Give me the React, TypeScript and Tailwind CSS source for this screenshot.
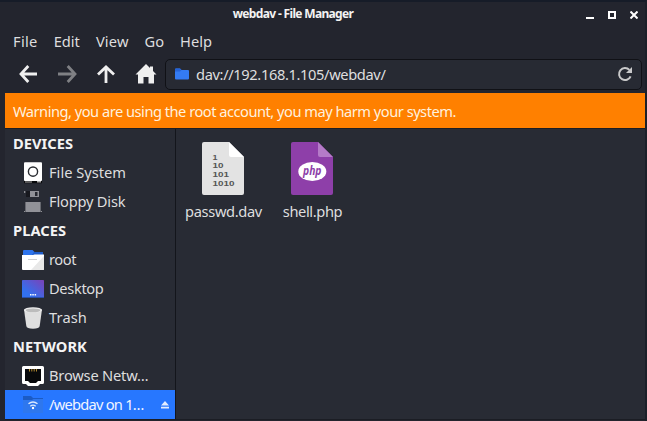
import type { ReactNode } from "react";

const places: { title: string; spacing: string; items: { label: string; spacing: string; icon: ReactNode; active?: boolean }[] }[] = [
  {
    title: "DEVICES",
    spacing: "tracking-[0.05px]",
    items: [
      { label: "File System", spacing: "tracking-[0px]", icon: <DriveIcon /> },
      { label: "Floppy Disk", spacing: "tracking-[-0.2px]", icon: <FloppyIcon /> },
    ],
  },
  {
    title: "PLACES",
    spacing: "tracking-[0.05px]",
    items: [
      { label: "root", spacing: "tracking-[-0.4px]", icon: <HomeFolderIcon /> },
      { label: "Desktop", spacing: "tracking-[-0.35px]", icon: <DesktopIcon /> },
      { label: "Trash", spacing: "tracking-[0.1px]", icon: <TrashIcon /> },
    ],
  },
  {
    title: "NETWORK",
    spacing: "tracking-[0.05px]",
    items: [
      { label: "Browse Netw…", spacing: "tracking-[-0.2px]", icon: <NetworkIcon /> },
      { label: "/webdav on 1…", spacing: "tracking-[-0.75px]", icon: <RemoteFolderIcon />, active: true },
    ],
  },
];

function DriveIcon() {
  return (
    <svg width="24" height="24" viewBox="0 0 24 24">
      <rect x="3" y="1.3" width="18" height="18.7" rx="1" fill="#fff" />
      <circle cx="12" cy="10.6" r="4.6" fill="#fff" stroke="#292c31" strokeWidth="1.4" />
      <path d="M3 20h18v2.200H3z" fill="#08090b" />
      <path d="M4 20.600h7v1H4zM16 20h4v1.600h-4z" fill="#aaa" />
    </svg>
  );
}

function FloppyIcon() {
  return (
    <svg width="24" height="24" viewBox="0 0 24 24">
      <path d="M3 1h1.300v2H3zM3 21h1v1H3zM20 21h1v1h-1z" fill="#8f9095" />
      <path d="M5 1h4v6H5z" fill="#17181e" />
      <path d="M9 1h9v6H9z" fill="#909198" />
      <path d="M14 2h2.500v4H14z" fill="#262830" />
      <path d="M4.400 12h15.200v10H4.400z" fill="#919298" />
    </svg>
  );
}

function HomeFolderIcon() {
  return (
    <svg width="24" height="24" viewBox="0 0 24 24">
      <path d="M2 3.200Q2 2 3 2h8.500l2 2H22v8H2z" fill="#2f74eb" />
      <path d="M13 4h9v3H11z" fill="#205ecb" />
      <path d="M1 7h11l1.500-.500H23V21q0 1-1 1H2q-1 0-1-1z" fill="#fff" />
      <path d="M23 8v13q0 1-1 1H10z" fill="#e8e8e8" />
      <path d="M7 11.500h9" stroke="#cfcfcf" />
    </svg>
  );
}

function DesktopIcon() {
  return (
    <svg width="24" height="24" viewBox="0 0 24 24">
      <defs>
        <linearGradient id="desk" x1="0" y1="1" x2="1" y2="0">
          <stop offset=".25" stopColor="#3271f0" />
          <stop offset="1" stopColor="#7b42b8" />
        </linearGradient>
      </defs>
      <rect x="1" y="3" width="22" height="18" rx=".7" fill="url(#desk)" />
      <path d="M1 20h22v1H1z" fill="#294fa8" />
      <path d="M9 17h1.500v1.500H9zM11.300 17h1.500v1.500h-1.500zM13.600 17h1.500v1.500h-1.500z" fill="#fff" />
    </svg>
  );
}

function TrashIcon() {
  return (
    <svg width="24" height="24" viewBox="0 0 24 24">
      <path d="M3 3.500 5.300 20q.4 2.800 6.700 2.800t6.700-2.800L21 3.500z" fill="#dfdfdf" />
      <ellipse cx="12" cy="4" rx="9" ry="2.800" fill="#ededed" />
      <ellipse cx="12" cy="4.300" rx="7.400" ry="1.900" fill="#bcbcbc" />
    </svg>
  );
}

function NetworkIcon() {
  return (
    <svg width="24" height="24" viewBox="0 0 24 24">
      <path d="M2.500 2h19Q23 2 23 3.500v15q0 1.500-1.500 1.500H19l-2 2H7l-2-2H2.500Q1 20 1 18.500V3.500Q1 2 2.500 2z" fill="#fff" />
      <path d="M4 5h16v12h-3l-2 2H9l-2-2H4z" fill="#08090b" />
      <path d="M8.500 5v2.500M10.800 5v2.500M13.200 5v2.500M15.500 5v2.500" stroke="#ad8730" />
    </svg>
  );
}

function RemoteFolderIcon() {
  return (
    <svg width="24" height="24" viewBox="0 0 24 24">
      <path d="M2 3h8l2 2h10v2H2z" fill="#1b5bc5" />
      <path d="M2 7h9l1.500-1H22v14H2z" fill="#2e77ee" />
      <g fill="none" stroke="#d9e9ff" strokeWidth="1.400">
        <path d="M7.500 10.800q4.500-3.600 9 0M9.300 13.200q2.700-2.200 5.400 0" />
      </g>
      <circle cx="12" cy="15" r="1.200" fill="#fff" />
    </svg>
  );
}

function Toolbar() {
  return (
    <div className="flex h-[36px] items-center pr-[3px] pl-[14px]">
      <svg className="mr-[19px] shrink-0" width="20" height="20" viewBox="0 0 20 20" fill="none" stroke="#efefef" strokeWidth="2.800">
        <path d="M9.300 2 2 10l7.300 8M2.500 10H18" />
      </svg>
      <svg className="mr-[19px] shrink-0" width="20" height="20" viewBox="0 0 20 20" fill="none" stroke="#7f8084" strokeWidth="2.800">
        <path d="m9.700 2 7.300 8-7.300 8M16.500 10H0" />
      </svg>
      <svg className="mr-[18px] shrink-0" width="20" height="20" viewBox="0 0 20 20" fill="none" stroke="#efefef" strokeWidth="2.800">
        <path d="M1 10.500 9 3l8 7.500M9 3.500V19" />
      </svg>
      <svg className="mr-[8px] shrink-0" width="22" height="22" viewBox="0 0 22 22" fill="#efefef">
        <path d="M11 1 .500 11.500H3V20.500h5.500V14h5v6.500H19v-9h2.500L18 8V3.500h-3V5z" />
      </svg>
      <div className="flex h-[31px] flex-1 items-center rounded-[5px] border border-[#101116] bg-[#272a33] px-[8px]">
        <svg width="16" height="16" viewBox="0 0 16 16">
          <path d="M1 3.500Q1 2.500 2 2.500h4l1.500 1.500H14q1 0 1 1v7.500q0 1-1 1H2q-1 0-1-1z" fill="#347bf3" />
          <path d="M1 3.500Q1 2.500 2 2.500h4l1.500 1.500L6 5.500H1z" fill="#2563d6" />
        </svg>
        <span className="ml-[6px] flex-1 tracking-[-0.37px] whitespace-nowrap">dav://192.168.1.105/webdav/</span>
        <svg width="16" height="16" viewBox="0 0 16 16" fill="none" stroke="#c9c9ca" strokeWidth="2">
          <path d="M13.600 10.300A6 6 0 1 1 12.400 3.900" />
          <path d="M15 1v6H9z" fill="#c9c9ca" stroke="none" />
        </svg>
      </div>
    </div>
  );
}

function Sidebar() {
  return (
    <aside className="w-[171px] shrink-0 border-r border-[#13151b]">
      {places.map((group) => (
        <section key={group.title}>
          <h2 className={`flex h-[29px] items-center pb-px pl-[8px] font-bold text-[#f4f4f4] ${group.spacing}`}>{group.title}</h2>
          {group.items.map((item) => (
            <div
              key={item.label}
              className={`flex h-[29px] items-center pr-[5px] pl-[16px] whitespace-nowrap ${item.active ? "bg-[#2777ff] text-[#f1f5ff]" : ""}`}
            >
              {item.icon}
              <span className={`ml-[4px] flex-1 pb-px ${item.spacing}`}>{item.label}</span>
              {item.active && (
                <svg width="10" height="10" viewBox="0 0 10 10" fill="#e3edff">
                  <path d="M5 1 9 5.500H1zM1 6.800h8v1.700H1z" />
                </svg>
              )}
            </div>
          ))}
        </section>
      ))}
    </aside>
  );
}

function BinaryFileIcon() {
  return (
    <svg width="42" height="53" viewBox="0 0 42 53">
      <path d="M2 0h25l15 15v36q0 2-2 2H2q-2 0-2-2V2Q0 0 2 0z" fill="#e3e3e3" />
      <path d="M27 0l15 15H29q-2 0-2-2z" fill="#fff" />
      <g fill="#555" fontFamily="Liberation Sans, sans-serif" fontWeight="700" fontSize="7.600">
        <text x="10.500" y="17.500" textLength="5" lengthAdjust="spacingAndGlyphs">1</text>
        <text x="10.500" y="26" textLength="11" lengthAdjust="spacingAndGlyphs">10</text>
        <text x="10.500" y="35" textLength="16.500" lengthAdjust="spacingAndGlyphs">101</text>
        <text x="10.500" y="43.500" textLength="22" lengthAdjust="spacingAndGlyphs">1010</text>
      </g>
    </svg>
  );
}

function PhpFileIcon() {
  return (
    <svg width="42" height="53" viewBox="0 0 42 53">
      <path d="M2 0h25l15 15v36q0 2-2 2H2q-2 0-2-2V2Q0 0 2 0z" fill="#8e3fa9" />
      <path d="M27 0l15 15H29q-2 0-2-2z" fill="#b57bc8" />
      <ellipse cx="21.300" cy="29.500" rx="14" ry="9.500" fill="#fff" />
      <text x="12" y="32.500" fontFamily="Open Sans, sans-serif" fontWeight="700" fontStyle="italic" fontSize="11.500" textLength="18.500" lengthAdjust="spacingAndGlyphs" fill="#8e3fa9">php</text>
    </svg>
  );
}

export default function App() {
  return (
    <div className="h-[421px] w-[647px] overflow-hidden border-t-2 border-r-2 border-t-[#161c28] border-r-[#1b2029] bg-[#23252e] pl-[5px] font-['Noto_Sans','Open_Sans',sans-serif] text-[14.67px] leading-5 text-[#dededf]">
      <header className="flex h-[25px] items-center pr-[7px]">
        <h1 className="flex-1 pr-[5px] pb-px text-center text-[12px] font-bold tracking-[-0.66px] text-[#f3f3f3]">webdav - File Manager</h1>
        <div className="flex gap-[14px]">
          <svg width="8" height="8" viewBox="0 0 8 8"><path d="M0 6h8v2H0z" fill="#fff" /></svg>
          <svg width="8" height="8" viewBox="0 0 8 8"><path d="M1 1h6v6H1z" fill="none" stroke="#fff" strokeWidth="2" /></svg>
          <svg width="8" height="8" viewBox="0 0 8 8"><path d="m.500.500 7 7m0-7-7 7" stroke="#fff" strokeWidth="2" /></svg>
        </div>
      </header>
      <nav className="mb-px flex h-[28px] items-center gap-[16px] pl-[8px]">
        <span className="tracking-[0.3px]">File</span><span>Edit</span><span className="tracking-[0.15px]">View</span><span>Go</span><span>Help</span>
      </nav>
      <Toolbar />
      <div className="mt-px flex h-[35px] items-center bg-[#ff8000] pl-[8px] text-[#fff1df]">
        <span className="tracking-[-0.5px] whitespace-nowrap">Warning, you are using the root account, you may harm your system.</span>
      </div>
      <div className="flex h-[292px] border-y border-[#1b1d24] bg-[#282b34]">
        <Sidebar />
        <main className="flex flex-1 items-start pt-[13px] pl-[3px]">
          <div className="flex w-[87px] flex-col items-center gap-[6px]"><BinaryFileIcon /><span className="pl-[2px] tracking-[-0.35px]">passwd.dav</span></div>
          <div className="flex w-[91px] flex-col items-center gap-[6px]"><PhpFileIcon /><span className="pl-[2px] tracking-[-0.4px]">shell.php</span></div>
        </main>
      </div>
    </div>
  );
}
